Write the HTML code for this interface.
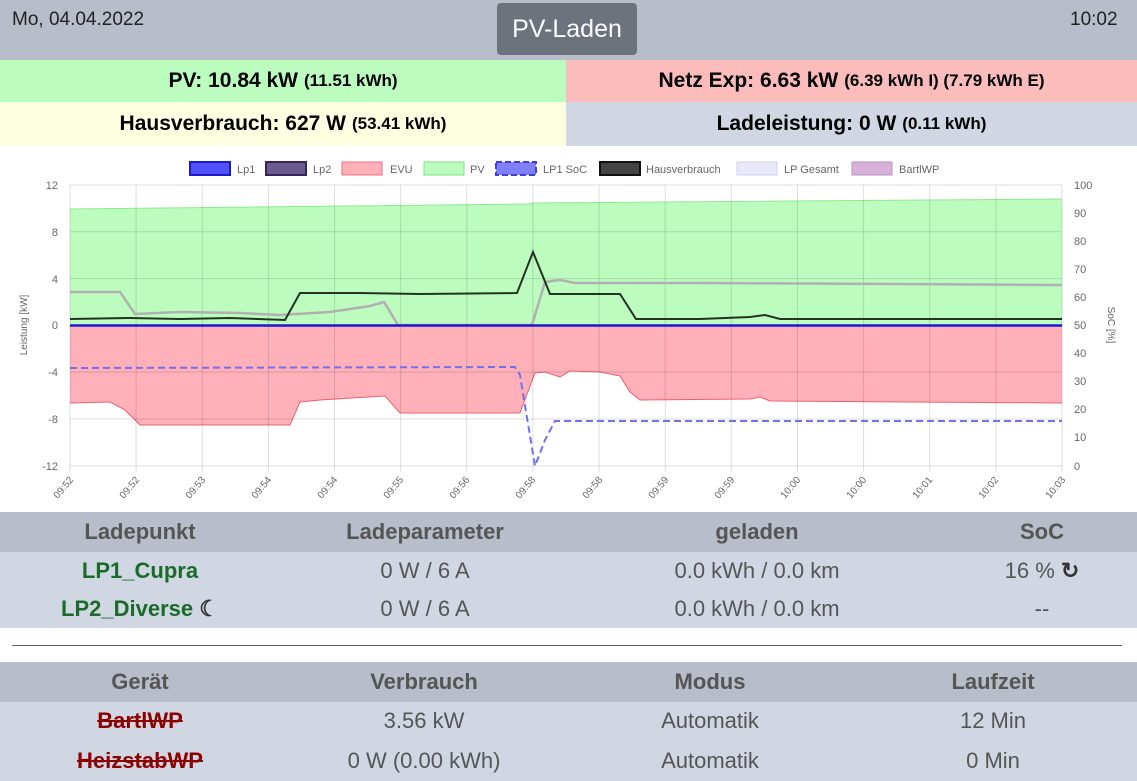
<!DOCTYPE html>
<html><head><meta charset="utf-8"><style>
*{margin:0;padding:0;box-sizing:border-box}
body{width:1137px;height:781px;background:#fff;font-family:"Liberation Sans",sans-serif;overflow:hidden;position:relative}
.abs{position:absolute}
.hdr{left:0;top:0;width:1137px;height:60px;background:#b7bdc9}
.cell{position:absolute;display:flex;align-items:center;justify-content:center;font-weight:bold;font-size:21px;color:#000}
.cell small{font-size:17px;margin-left:6px}
.th,.tr{position:absolute;left:0;width:1137px;display:flex;font-size:22px;color:#555}
.th{background:#b7bdc9;font-weight:bold;height:40px;align-items:center}
.tr{background:#d0d7e3;height:38px;align-items:center}
.c{position:absolute;transform:translateX(-50%);white-space:nowrap}
</style></head><body>
<div class="abs hdr"></div>
<div class="abs" style="left:12px;top:9px;font-size:19px;color:#222">Mo, 04.04.2022</div>
<div class="abs" style="left:1070px;top:9px;font-size:19px;color:#222">10:02</div>
<div class="abs" style="left:497px;top:3px;width:140px;height:52px;background:#6c737d;border-radius:4px;color:#fff;font-size:25px;display:flex;align-items:center;justify-content:center">PV-Laden</div>
<div class="cell" style="left:0;top:60px;width:566px;height:42px;background:#bdfcbf">PV: 10.84 kW<small>(11.51 kWh)</small></div>
<div class="cell" style="left:566px;top:60px;width:571px;height:42px;background:#fbbcbb">Netz Exp: 6.63 kW<small>(6.39 kWh I) (7.79 kWh E)</small></div>
<div class="cell" style="left:0;top:102px;width:566px;height:44px;background:#fefee0">Hausverbrauch: 627 W<small>(53.41 kWh)</small></div>
<div class="cell" style="left:566px;top:102px;width:571px;height:44px;background:#d0d7e3">Ladeleistung: 0 W<small>(0.11 kWh)</small></div>

<svg class="abs" style="left:0;top:146px" width="1137" height="366" viewBox="0 146 1137 366" font-family="Liberation Sans" font-size="11" fill="#666">
<g font-size="11">
<rect x="190" y="162" width="40" height="13" fill="#5050ff" stroke="#1a1acc" stroke-width="2"/><text x="237" y="173">Lp1</text>
<rect x="266" y="162" width="40" height="13" fill="#6a5a90" stroke="#332855" stroke-width="2"/><text x="313" y="173">Lp2</text>
<rect x="342" y="162" width="40" height="13" fill="#ffb0b8" stroke="#ee7080" stroke-width="1"/><text x="390" y="173">EVU</text>
<rect x="424" y="162" width="40" height="13" fill="#bdfcbf" stroke="#80e080" stroke-width="1"/><text x="470" y="173">PV</text>
<rect x="496" y="162" width="40" height="13" fill="#8080ff" stroke="#4040dd" stroke-width="2" stroke-dasharray="6,3"/><text x="543" y="173">LP1 SoC</text>
<rect x="600" y="162" width="40" height="13" fill="#444" stroke="#111" stroke-width="2"/><text x="646" y="173">Hausverbrauch</text>
<rect x="737" y="162" width="40" height="13" fill="#e8e8f8" stroke="#d0d0f0"/><text x="784" y="173">LP Gesamt</text>
<rect x="852" y="162" width="40" height="13" fill="#d8b0d8" stroke="#c090c0"/><text x="899" y="173">BartlWP</text>
</g>
<path d="M70 209 L530 204 L532 203 L1062 199 L1062 325 L70 325Z" fill="#bdfcbf"/>
<path d="M70 209 L530 204 L532 203 L1062 199" stroke="#90e890" fill="none"/>
<path d="M70 325 L1062 325 L1062 403 L770 401 L760 397 L750 399 L640 400 L630 392 L620 376 L600 372 L570 371 L560 377 L545 372 L535 373 L520 413 L400 413 L385 396 L320 400 L300 402 L290 425 L230 425 L140 425 L125 410 L110 402 L70 403Z" fill="#ffb0b8"/>
<path d="M1062 403 L770 401 L760 397 L750 399 L640 400 L630 392 L620 376 L600 372 L570 371 L560 377 L545 372 L535 373 L520 413 L400 413 L385 396 L320 400 L300 402 L290 425 L230 425 L140 425 L125 410 L110 402 L70 403" stroke="#ee6070" fill="none"/>
<g stroke="rgba(0,0,0,0.13)" stroke-width="1">
<path d="M70 185H1062M70 231.8H1062M70 278.6H1062M70 372H1062M70 419H1062M70 466H1062"/>
<path d="M70 185V472M136.1 185V472M202.3 185V472M268.4 185V472M334.5 185V472M400.7 185V472M466.8 185V472M532.9 185V472M599.1 185V472M665.2 185V472M731.3 185V472M797.5 185V472M863.6 185V472M929.7 185V472M995.9 185V472M1062 185V472"/>
</g>
<path d="M70 292 L120 292 L135 314 L180 312 L240 313 L280 315 L330 312 L370 306 L384 302 L398 325 L532 325 L545 282 L560 280 L575 283 L700 283 L900 284 L1062 285" stroke="#b0b0b0" stroke-width="2.5" fill="none"/>
<path d="M70 319 L130 318 L180 319 L230 318 L285 320 L300 293 L360 293 L420 294 L517 293 L533 252 L550 294 L620 294 L636 319 L700 319 L750 317 L765 315 L780 319 L1062 319" stroke="#223322" stroke-width="2" fill="none"/>
<path d="M70 325.5H1062" stroke="#1a1acc" stroke-width="2.5"/>
<path d="M70 368 L515 367 L520 375 L535 466 L545 440 L555 421 L1062 421" stroke="#7070f0" stroke-width="2" stroke-dasharray="7,4" fill="none"/>
<g text-anchor="end" font-size="11"><text x="58" y="189">12</text><text x="58" y="236">8</text><text x="58" y="283">4</text><text x="58" y="329">0</text><text x="58" y="376">-4</text><text x="58" y="423">-8</text><text x="58" y="470">-12</text></g>
<g font-size="11"><text x="1074" y="189">100</text><text x="1074" y="217">90</text><text x="1074" y="245">80</text><text x="1074" y="273">70</text><text x="1074" y="301">60</text><text x="1074" y="329">50</text><text x="1074" y="357">40</text><text x="1074" y="385">30</text><text x="1074" y="413">20</text><text x="1074" y="441">10</text><text x="1074" y="470">0</text></g>
<text transform="translate(27 325) rotate(-90)" text-anchor="middle" font-size="10">Leistung [kW]</text>
<text transform="translate(1108 325) rotate(90)" text-anchor="middle" font-size="10">SoC [%]</text>
<g font-size="10" text-anchor="end">
<text transform="translate(74 480) rotate(-50)">09:52</text><text transform="translate(140 480) rotate(-50)">09:52</text><text transform="translate(206 480) rotate(-50)">09:53</text><text transform="translate(272 480) rotate(-50)">09:54</text><text transform="translate(338 480) rotate(-50)">09:54</text><text transform="translate(404 480) rotate(-50)">09:55</text><text transform="translate(470 480) rotate(-50)">09:56</text><text transform="translate(536 480) rotate(-50)">09:58</text><text transform="translate(603 480) rotate(-50)">09:58</text><text transform="translate(669 480) rotate(-50)">09:59</text><text transform="translate(735 480) rotate(-50)">09:59</text><text transform="translate(801 480) rotate(-50)">10:00</text><text transform="translate(867 480) rotate(-50)">10:00</text><text transform="translate(933 480) rotate(-50)">10:01</text><text transform="translate(999 480) rotate(-50)">10:02</text><text transform="translate(1066 480) rotate(-50)">10:03</text>
</g>
</svg>

<div class="th" style="top:512px"><span class="c" style="left:140px">Ladepunkt</span><span class="c" style="left:425px">Ladeparameter</span><span class="c" style="left:757px">geladen</span><span class="c" style="left:1042px">SoC</span></div>
<div class="tr" style="top:552px"><span class="c" style="left:140px;font-weight:bold;color:#1a6b2a">LP1_Cupra</span><span class="c" style="left:425px">0 W / 6 A</span><span class="c" style="left:757px">0.0 kWh / 0.0 km</span><span class="c" style="left:1042px">16 % <b style="color:#333">&#x21BB;</b></span></div>
<div class="tr" style="top:590px"><span class="c" style="left:140px;font-weight:bold;color:#1a6b2a">LP2_Diverse <span style="color:#333">&#x263E;</span></span><span class="c" style="left:425px">0 W / 6 A</span><span class="c" style="left:757px">0.0 kWh / 0.0 km</span><span class="c" style="left:1042px">--</span></div>
<div class="abs" style="left:12px;top:645px;width:1110px;height:1px;background:#666"></div>
<div class="th" style="top:662px"><span class="c" style="left:140px">Gerät</span><span class="c" style="left:424px">Verbrauch</span><span class="c" style="left:710px">Modus</span><span class="c" style="left:993px">Laufzeit</span></div>
<div class="tr" style="top:702px"><span class="c" style="left:140px;font-weight:bold;color:#8b0000;text-decoration:line-through">BartlWP</span><span class="c" style="left:424px">3.56 kW</span><span class="c" style="left:710px">Automatik</span><span class="c" style="left:993px">12 Min</span></div>
<div class="tr" style="top:740px;height:41px"><span class="c" style="left:140px;font-weight:bold;color:#8b0000;text-decoration:line-through">HeizstabWP</span><span class="c" style="left:424px">0 W (0.00 kWh)</span><span class="c" style="left:710px">Automatik</span><span class="c" style="left:993px">0 Min</span></div>
</body></html>
